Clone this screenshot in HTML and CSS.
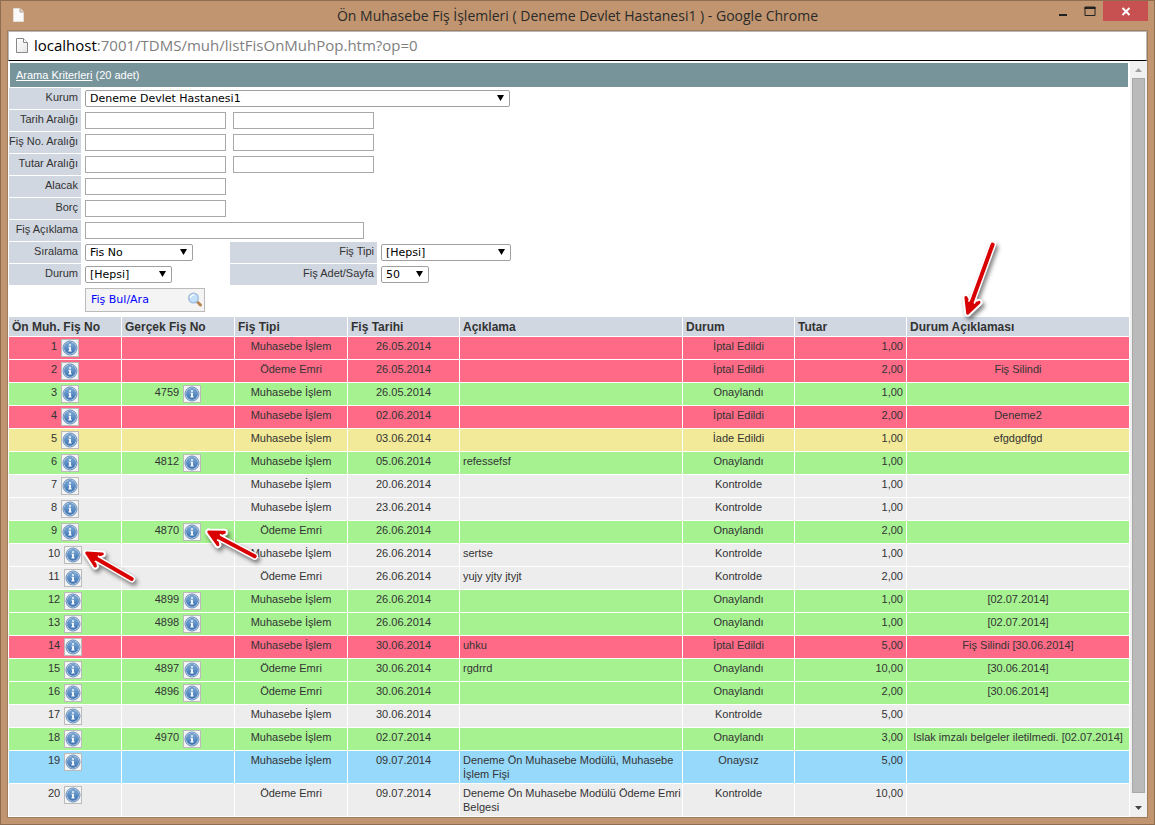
FILE: index.html
```html
<!DOCTYPE html>
<html lang="tr">
<head>
<meta charset="utf-8">
<title>Ön Muhasebe Fiş İşlemleri</title>
<link rel="stylesheet" href="styles.css">
</head>
<body>
<svg class="defs" aria-hidden="true">
  <defs>
    <linearGradient id="blue" x1="0" y1="0" x2="0" y2="1"><stop offset="0" stop-color="#7fadd8"/><stop offset="1" stop-color="#3a70b0"/></linearGradient>
    <linearGradient id="paper" x1="0" y1="0" x2="1" y2="1"><stop offset="0" stop-color="#ffffff"/><stop offset="1" stop-color="#e6e6e6"/></linearGradient>
    <symbol id="info" viewBox="0 0 16 16">
      <circle cx="8" cy="8" r="7" fill="#d3e2f1" stroke="#5f8abb"/>
      <circle cx="8" cy="8" r="5.6" fill="url(#blue)" stroke="#4a78b0" stroke-width=".6"/>
      <path d="M7.1 4.2h1.8v1.6H7.1zM6.4 6.7h2.5v3.9h.8v1H6.3v-1h.8V7.6h-.7z" fill="#fff"/>
    </symbol>
    <symbol id="arrow-56" viewBox="-4 -12 68 24">
      <path d="M10 0H54M2 0L16 -7M2 0L16 7" fill="none" stroke="#fff" stroke-width="7" stroke-linecap="round"/>
      <path d="M2 0L16 -7L10 0L16 7Z" fill="#d80000" stroke="#d80000" stroke-width="3" stroke-linejoin="round"/>
      <path d="M13 -3L19 -3M13 3L19 3" stroke="#fff" stroke-width="1.5"/>
      <path d="M10 0H54" stroke="#d80000" stroke-width="4" stroke-linecap="round"/>
    </symbol>
  </defs>
</svg>
<div class="window">
  <header class="titlebar">
    <svg class="title-icon" viewBox="0 0 11 14"><path d="M.5 .5H7L10.500 4V13.500H.5Z" fill="#fafafa" stroke="#e4dcd4"/><path d="M7 .5V4H10.500" fill="#ddd" stroke="#b49a84"/></svg>
    <h1 class="title">Ön Muhasebe Fiş İşlemleri ( Deneme Devlet Hastanesi1 ) - Google Chrome</h1>
    <div class="controls">
      <button class="ctl" type="button" aria-label="Simge durumuna küçült"><svg viewBox="0 0 27 20"><path d="M10 13h8v2h-8z" fill="#222"/></svg></button>
      <button class="ctl" type="button" aria-label="Ekranı kapla"><svg viewBox="0 0 27 20"><path d="M9 6h10v8.500H9z" fill="none" stroke="#222"/><path d="M8.500 6h11v2h-11z" fill="#222"/></svg></button>
      <button class="ctl close" type="button" aria-label="Kapat"><svg viewBox="0 0 45 20"><path d="M19.500 7l7 7M26.500 7l-7 7" stroke="#fff" stroke-width="2"/></svg></button>
    </div>
  </header>
  <div class="frame">
    <div class="address">
      <svg class="page-icon" viewBox="0 0 12 15"><path d="M.5 .5H7.500L11.500 4.500V14.500H.5Z" fill="url(#paper)" stroke="#888"/><path d="M7.500 .5V4.500H11.500" fill="#fff" stroke="#888"/></svg>
      <span class="url"><span class="host">localhost</span>:7001/TDMS/muh/listFisOnMuhPop.htm?op=0</span>
    </div>
    <div class="viewport">
      <main class="page">
        <div class="criteria"><a href="#arama">Arama Kriterleri</a> (20 adet)</div>
        <form class="search" id="arama">
          <div class="row"><label for="kurum">Kurum</label><div class="field"><span class="pick w-kurum"><select id="kurum"><option>Deneme Devlet Hastanesi1</option></select></span></div></div>
          <div class="row"><label for="tarih">Tarih Aralığı</label><div class="field"><input id="tarih" type="text"><input type="text" aria-label="Tarih bitiş"></div></div>
          <div class="row"><label for="no">Fiş No. Aralığı</label><div class="field"><input id="no" type="text"><input type="text" aria-label="Fiş No. bitiş"></div></div>
          <div class="row"><label for="tutar">Tutar Aralığı</label><div class="field"><input id="tutar" type="text"><input type="text" aria-label="Tutar bitiş"></div></div>
          <div class="row"><label for="alacak">Alacak</label><div class="field"><input id="alacak" type="text"></div></div>
          <div class="row"><label for="borc">Borç</label><div class="field"><input id="borc" type="text"></div></div>
          <div class="row"><label for="aciklama">Fiş Açıklama</label><div class="field"><input id="aciklama" class="long" type="text"></div></div>
          <div class="row"><label for="sira">Sıralama</label><div class="field half"><span class="pick w-sira"><select id="sira"><option>Fis No</option></select></span></div><label class="wide" for="tip">Fiş Tipi</label><div class="field"><span class="pick w-tip"><select id="tip"><option>[Hepsi]</option></select></span></div></div>
          <div class="row"><label for="durum">Durum</label><div class="field half"><span class="pick w-durum"><select id="durum"><option>[Hepsi]</option></select></span></div><label class="wide" for="adet">Fiş Adet/Sayfa</label><div class="field"><span class="pick w-adet"><select id="adet"><option>50</option></select></span></div></div>
          <button class="find" type="button">Fiş Bul/Ara
            <svg viewBox="0 0 16 16"><path d="M10.500 10l3 3" stroke="#b98550" stroke-width="3" stroke-linecap="round"/><path d="M9 9l1.500 1.500" stroke="#999" stroke-width="1.500"/><circle cx="6.500" cy="6" r="4.800" fill="#c4e0fa" stroke="#a2bede" stroke-width="1.400"/><path d="M3.500 6a3 3 0 0 1 4-3" fill="none" stroke="#fff" stroke-width="1.200"/></svg>
          </button>
        </form>
        <div class="report">
          <table>
            <colgroup><col class="c-no"><col class="c-no"><col class="c-no"><col class="c1"><col class="c2"><col class="c1"><col class="c1"><col class="c2"></colgroup>
            <thead><tr><th>Ön Muh. Fiş No</th><th>Gerçek Fiş No</th><th>Fiş Tipi</th><th>Fiş Tarihi</th><th>Açıklama</th><th>Durum</th><th>Tutar</th><th>Durum Açıklaması</th></tr></thead>
            <tbody>
              <tr class="red"><td><div class="ref">1<button class="info" type="button" aria-label="Bilgi"><svg><use href="#info"/></svg></button></div></td><td></td><td>Muhasebe İşlem</td><td>26.05.2014</td><td class="text"></td><td>İptal Edildi</td><td class="num">1,00</td><td></td></tr>
              <tr class="red"><td><div class="ref">2<button class="info" type="button" aria-label="Bilgi"><svg><use href="#info"/></svg></button></div></td><td></td><td>Ödeme Emri</td><td>26.05.2014</td><td class="text"></td><td>İptal Edildi</td><td class="num">2,00</td><td>Fiş Silindi</td></tr>
              <tr class="green"><td><div class="ref">3<button class="info" type="button" aria-label="Bilgi"><svg><use href="#info"/></svg></button></div></td><td><div class="ref">4759<button class="info" type="button" aria-label="Bilgi"><svg><use href="#info"/></svg></button></div></td><td>Muhasebe İşlem</td><td>26.05.2014</td><td class="text"></td><td>Onaylandı</td><td class="num">1,00</td><td></td></tr>
              <tr class="red"><td><div class="ref">4<button class="info" type="button" aria-label="Bilgi"><svg><use href="#info"/></svg></button></div></td><td></td><td>Muhasebe İşlem</td><td>02.06.2014</td><td class="text"></td><td>İptal Edildi</td><td class="num">2,00</td><td>Deneme2</td></tr>
              <tr class="yellow"><td><div class="ref">5<button class="info" type="button" aria-label="Bilgi"><svg><use href="#info"/></svg></button></div></td><td></td><td>Muhasebe İşlem</td><td>03.06.2014</td><td class="text"></td><td>İade Edildi</td><td class="num">1,00</td><td>efgdgdfgd</td></tr>
              <tr class="green"><td><div class="ref">6<button class="info" type="button" aria-label="Bilgi"><svg><use href="#info"/></svg></button></div></td><td><div class="ref">4812<button class="info" type="button" aria-label="Bilgi"><svg><use href="#info"/></svg></button></div></td><td>Muhasebe İşlem</td><td>05.06.2014</td><td class="text">refessefsf</td><td>Onaylandı</td><td class="num">1,00</td><td></td></tr>
              <tr><td><div class="ref">7<button class="info" type="button" aria-label="Bilgi"><svg><use href="#info"/></svg></button></div></td><td></td><td>Muhasebe İşlem</td><td>20.06.2014</td><td class="text"></td><td>Kontrolde</td><td class="num">1,00</td><td></td></tr>
              <tr><td><div class="ref">8<button class="info" type="button" aria-label="Bilgi"><svg><use href="#info"/></svg></button></div></td><td></td><td>Muhasebe İşlem</td><td>23.06.2014</td><td class="text"></td><td>Kontrolde</td><td class="num">1,00</td><td></td></tr>
              <tr class="green"><td><div class="ref">9<button class="info" type="button" aria-label="Bilgi"><svg><use href="#info"/></svg></button></div></td><td><div class="ref">4870<button class="info" type="button" aria-label="Bilgi"><svg><use href="#info"/></svg></button></div></td><td>Ödeme Emri</td><td>26.06.2014</td><td class="text"></td><td>Onaylandı</td><td class="num">2,00</td><td></td></tr>
              <tr><td><div class="ref">10<button class="info" type="button" aria-label="Bilgi"><svg><use href="#info"/></svg></button></div></td><td></td><td>Muhasebe İşlem</td><td>26.06.2014</td><td class="text">sertse</td><td>Kontrolde</td><td class="num">1,00</td><td></td></tr>
              <tr><td><div class="ref">11<button class="info" type="button" aria-label="Bilgi"><svg><use href="#info"/></svg></button></div></td><td></td><td>Ödeme Emri</td><td>26.06.2014</td><td class="text">yujy yjty jtyjt</td><td>Kontrolde</td><td class="num">2,00</td><td></td></tr>
              <tr class="green"><td><div class="ref">12<button class="info" type="button" aria-label="Bilgi"><svg><use href="#info"/></svg></button></div></td><td><div class="ref">4899<button class="info" type="button" aria-label="Bilgi"><svg><use href="#info"/></svg></button></div></td><td>Muhasebe İşlem</td><td>26.06.2014</td><td class="text"></td><td>Onaylandı</td><td class="num">1,00</td><td>[02.07.2014]</td></tr>
              <tr class="green"><td><div class="ref">13<button class="info" type="button" aria-label="Bilgi"><svg><use href="#info"/></svg></button></div></td><td><div class="ref">4898<button class="info" type="button" aria-label="Bilgi"><svg><use href="#info"/></svg></button></div></td><td>Muhasebe İşlem</td><td>26.06.2014</td><td class="text"></td><td>Onaylandı</td><td class="num">1,00</td><td>[02.07.2014]</td></tr>
              <tr class="red"><td><div class="ref">14<button class="info" type="button" aria-label="Bilgi"><svg><use href="#info"/></svg></button></div></td><td></td><td>Muhasebe İşlem</td><td>30.06.2014</td><td class="text">uhku</td><td>İptal Edildi</td><td class="num">5,00</td><td>Fiş Silindi [30.06.2014]</td></tr>
              <tr class="green"><td><div class="ref">15<button class="info" type="button" aria-label="Bilgi"><svg><use href="#info"/></svg></button></div></td><td><div class="ref">4897<button class="info" type="button" aria-label="Bilgi"><svg><use href="#info"/></svg></button></div></td><td>Ödeme Emri</td><td>30.06.2014</td><td class="text">rgdrrd</td><td>Onaylandı</td><td class="num">10,00</td><td>[30.06.2014]</td></tr>
              <tr class="green"><td><div class="ref">16<button class="info" type="button" aria-label="Bilgi"><svg><use href="#info"/></svg></button></div></td><td><div class="ref">4896<button class="info" type="button" aria-label="Bilgi"><svg><use href="#info"/></svg></button></div></td><td>Ödeme Emri</td><td>30.06.2014</td><td class="text"></td><td>Onaylandı</td><td class="num">2,00</td><td>[30.06.2014]</td></tr>
              <tr><td><div class="ref">17<button class="info" type="button" aria-label="Bilgi"><svg><use href="#info"/></svg></button></div></td><td></td><td>Muhasebe İşlem</td><td>30.06.2014</td><td class="text"></td><td>Kontrolde</td><td class="num">5,00</td><td></td></tr>
              <tr class="green"><td><div class="ref">18<button class="info" type="button" aria-label="Bilgi"><svg><use href="#info"/></svg></button></div></td><td><div class="ref">4970<button class="info" type="button" aria-label="Bilgi"><svg><use href="#info"/></svg></button></div></td><td>Muhasebe İşlem</td><td>02.07.2014</td><td class="text"></td><td>Onaylandı</td><td class="num">3,00</td><td>Islak imzalı belgeler iletilmedi. [02.07.2014]</td></tr>
              <tr class="blue"><td><div class="ref">19<button class="info" type="button" aria-label="Bilgi"><svg><use href="#info"/></svg></button></div></td><td></td><td>Muhasebe İşlem</td><td>09.07.2014</td><td class="text">Deneme Ön Muhasebe Modülü, Muhasebe İşlem Fişi</td><td>Onaysız</td><td class="num">5,00</td><td></td></tr>
              <tr><td><div class="ref">20<button class="info" type="button" aria-label="Bilgi"><svg><use href="#info"/></svg></button></div></td><td></td><td>Ödeme Emri</td><td>09.07.2014</td><td class="text">Deneme Ön Muhasebe Modülü Ödeme Emri Belgesi</td><td>Kontrolde</td><td class="num">10,00</td><td></td></tr>
            </tbody>
          </table>
          <svg class="arrow a-draft" viewBox="0 0 64 44"><g transform="translate(3 5) rotate(30)"><use href="#arrow-56" x="-4" y="-12" width="68" height="24"/></g></svg>
          <svg class="arrow a-real" viewBox="0 0 64 44"><g transform="translate(3 5) rotate(28)"><use href="#arrow-56" x="-4" y="-12" width="68" height="24"/></g></svg>
          <svg class="arrow a-status" viewBox="0 0 50 90"><g transform="translate(12 80) rotate(-70)">
            <path d="M10 0H75M2 0L16 -7M2 0L16 7" fill="none" stroke="#fff" stroke-width="7" stroke-linecap="round"/>
            <path d="M2 0L16 -7L10 0L16 7Z" fill="#d80000" stroke="#d80000" stroke-width="3" stroke-linejoin="round"/>
            <path d="M13 -3L19 -3M13 3L19 3" stroke="#fff" stroke-width="1.500"/>
            <path d="M10 0H75" stroke="#d80000" stroke-width="4" stroke-linecap="round"/></g></svg>
        </div>
      </main>
      <div class="scrollbar" aria-hidden="true">
        <svg class="up" viewBox="0 0 17 17"><path d="M5 11L8.500 7L12 11Z" fill="#a0a0a0"/></svg>
        <div class="track"><div class="thumb"></div></div>
        <svg class="down" viewBox="0 0 17 17"><path d="M5 6L8.500 10L12 6Z" fill="#444"/></svg>
      </div>
    </div>
  </div>
</div>
</body>
</html>
```
FILE: styles.css
```css
* { box-sizing: border-box; }
body { margin: 0; font: 11px/14px "Liberation Sans", Arial, sans-serif; color: #333; }
svg { display: block; }
.defs { position: absolute; width: 0; height: 0; }

.window { min-height: 100vh; display: flex; flex-direction: column; padding: 0 6px 6px; background: #c1956f; border: 1px solid #8f6d50; }
.titlebar { display: grid; grid-template-columns: 120px 1fr 120px; align-items: start; height: 29px; }
.title-icon { width: 11px; height: 14px; margin: 7px 0 0 6px; }
.title { margin: 0; font: 14px/29px "Open Sans", "Noto Sans", sans-serif; color: #2a2a2a; text-align: center; white-space: nowrap; }
.controls { display: flex; justify-content: flex-end; }
.ctl { width: 27px; height: 20px; padding: 0; border: 0; background: none; }
.close { width: 45px; background: #c75050; }

.frame { flex: 1; display: flex; flex-direction: column; border: 1px solid #a07c5c; background: #fff; }
.address { display: flex; align-items: center; gap: 6px; height: 30px; padding: 0 7px 1px; border: 1px solid #b8b8b8; border-bottom: 1px solid #000; font: 15px/28px "Open Sans", "Noto Sans", sans-serif; color: #808080; }
.page-icon { width: 12px; height: 15px; }
.url { padding-bottom: 2px; }
.host { color: #000; }
.viewport { flex: 1; display: flex; }
.page { flex: 1; min-width: 0; padding: 2px 0 0 1px; }

.criteria { margin: 0 2px 1px 1px; padding: 5px 6px; background: #78949b; color: #fff; }
.criteria a { color: #fff; }

.search { margin-bottom: 5px; }
.row { display: flex; margin-bottom: 1px; }
.row label { width: 72px; height: 21px; padding: 0 3px 2px 0; line-height: 19px; text-align: right; white-space: nowrap; background: #d0d7e1; }
.row label.wide { width: 147px; }
.field { display: flex; gap: 7px; padding: 2px 4px; }
.half { width: 149px; }
.field input { width: 141px; height: 17px; padding: 0 3px; border: 1px solid #a9a9a9; background: #fff; }
.field input.long { width: 279px; }
.pick { position: relative; height: 17px; }
.pick select { display: block; width: 100%; height: 17px; padding: 0 4px; border: 1px solid #a0a0a0; border-radius: 2px; background: #fff; appearance: none; font: 11px/15px "DejaVu Sans", Verdana, sans-serif; color: #000; }
.pick::after { content: ""; position: absolute; right: 6px; top: 5px; width: 7px; height: 6px; background: #000; clip-path: polygon(0 0, 100% 0, 50% 100%); pointer-events: none; }
.w-kurum { width: 425px; }
.w-sira { width: 108px; }
.w-durum { width: 87px; }
.w-tip { width: 130px; }
.w-adet { width: 48px; }
.find { display: flex; align-items: center; justify-content: space-between; width: 120px; height: 24px; margin: 3px 0 0 76px; padding: 0 1px 0 5px; border: 1px solid #bbb; background: #f4f4f4; font: 11px/14px "DejaVu Sans", Verdana, sans-serif; color: #00f; }
.find svg { width: 16px; height: 16px; }

.report { position: relative; }
table { width: 100%; table-layout: fixed; border-collapse: separate; border-spacing: 0; }
.c-no { width: 113px; }
.c1 { width: 112px; }
.c2 { width: 223px; }
th, td { border-right: 1px solid #fff; border-bottom: 1px solid #fff; }
th { height: 20px; padding: 3px 3px 2px; background: #d0d7e1; font-size: 12px; text-align: left; white-space: nowrap; }
td { height: 23px; padding: 2px 3px; background: #ededed; text-align: center; vertical-align: top; }
.text { padding-right: 0; text-align: left; }
.num { text-align: right; }
.red td { background: #ff6b87; }
.green td { background: #a6f291; }
.yellow td { background: #f2ea98; }
.blue td { background: #97d9fb; }
.ref { display: flex; justify-content: center; gap: 4px; }
.info { width: 18px; height: 18px; padding: 0; border: 1px solid #bbb; background: #f4f4f4; }
.info svg { width: 16px; height: 16px; }

.arrow { position: absolute; overflow: visible; filter: drop-shadow(2px 3px 2px rgba(0, 0, 0, .5)); pointer-events: none; }
.a-draft, .a-real { width: 64px; height: 44px; }
.a-draft { left: 73px; top: 230px; }
.a-real { left: 195px; top: 209px; }
.a-status { width: 50px; height: 90px; left: 946px; top: -82px; }

.scrollbar { display: flex; flex-direction: column; width: 17px; background: #f0f0f0; }
.up, .down { width: 17px; height: 17px; }
.track { flex: 1; padding: 0 2px; }
.thumb { height: 99%; border: 1px solid #a8a8a8; background: #bababa; }
```
